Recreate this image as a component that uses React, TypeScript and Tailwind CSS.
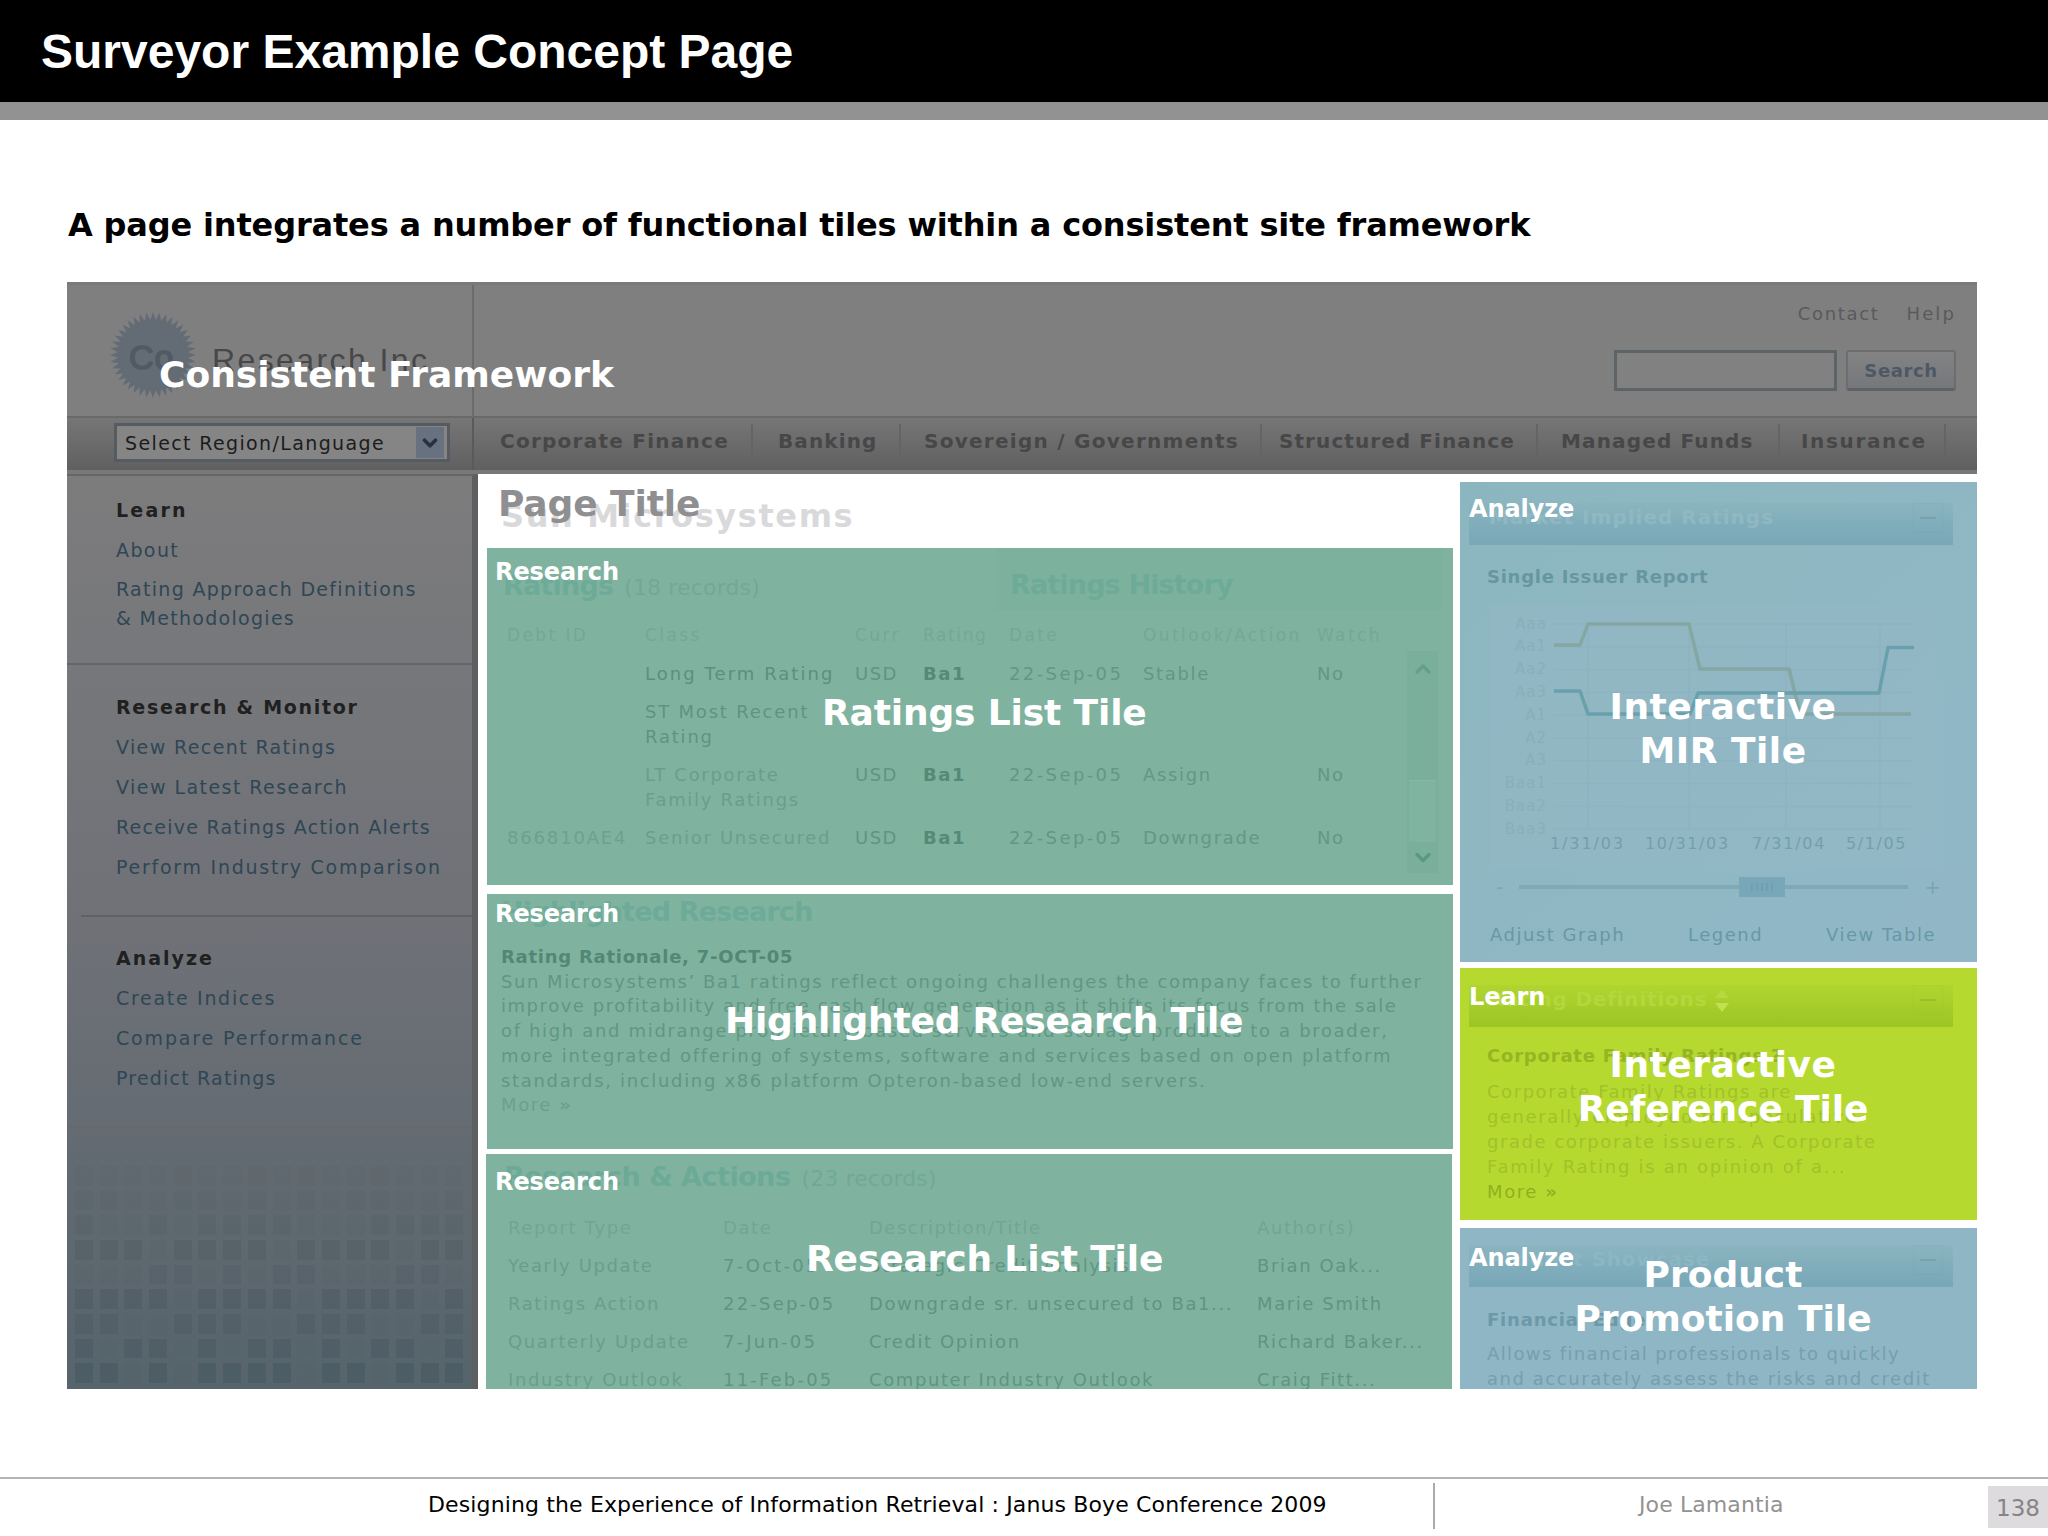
import React from 'react';
import { ChevronDown, ChevronUp } from 'lucide-react';

const NAV_ITEMS = [
  { label: 'Corporate Finance', cls: 'w-[279px] pl-[26px] tracking-[1.25px]' },
  { label: 'Banking', cls: 'w-[148px] pl-[25px] tracking-[1.1px]' },
  { label: 'Sovereign / Governments', cls: 'w-[361px] pl-[23px] tracking-[1.27px]' },
  { label: 'Structured Finance', cls: 'w-[276px] pl-[17px] tracking-[1.08px]' },
  { label: 'Managed Funds', cls: 'w-[242px] pl-[23px] tracking-[1.15px]' },
  { label: 'Insurance', cls: 'w-[166px] pl-[21px] tracking-[1.65px]' },
];

// one string per row, "1" is a visible square
const MOSAIC = [
  '0000100101001000',
  '1100110101011001',
  '1001011110001111',
  '1110111101111011',
  '0001101011000110',
  '1111011110111101',
  '1100111001110011',
  '1011010110101101',
  '1101011110110111',
];
const MOSAIC_TONES = [
  'bg-[#4f564a]/8',
  'bg-[#3f4f58]/10',
  'bg-[#3f4b50]/12',
  'bg-[#3f464e]/18',
  'bg-[#3f4b54]/16',
  'bg-[#3a4850]/22',
  'bg-[#3a4c54]/22',
  'bg-[#324850]/22',
  'bg-[#324850]/26',
];

const RATINGS = [
  { id: '', cls: 'Long Term Rating', cur: 'USD', rating: 'Ba1', date: '22-Sep-05', action: 'Stable', watch: 'No', tone: 'text-[#5b907c] tracking-[2.05px]' },
  { id: '', cls: 'ST Most Recent\nRating', cur: '', rating: '', date: '', action: '', watch: '', tone: 'text-[#5f9480] tracking-[1.8px]' },
  { id: '', cls: 'LT Corporate\nFamily Ratings', cur: 'USD', rating: 'Ba1', date: '22-Sep-05', action: 'Assign', watch: 'No', tone: 'text-[#689f8b] tracking-[1.7px]' },
  { id: '866810AE4', cls: 'Senior Unsecured', cur: 'USD', rating: 'Ba1', date: '22-Sep-05', action: 'Downgrade', watch: 'No', tone: 'text-[#69a08c] tracking-[1.7px]' },
];

const REPORTS = [
  ['Yearly Update', '7-Oct-05', 'Strategic Credit Analysis', 'Brian Oak...'],
  ['Ratings Action', '22-Sep-05', 'Downgrade sr. unsecured to Ba1...', 'Marie Smith'],
  ['Quarterly Update', '7-Jun-05', 'Credit Opinion', 'Richard Baker...'],
  ['Industry Outlook', '11-Feb-05', 'Computer Industry Outlook', 'Craig Fitt...'],
];

const Y_LABELS = ['Aaa', 'Aa1', 'Aa2', 'Aa3', 'A1', 'A2', 'A3', 'Baa1', 'Baa2', 'Baa3'];

const Logo = () => {
  const points = Array.from({ length: 80 }, (_, i) => {
    const r = i % 2 ? 35 : 43;
    const a = (i / 80) * Math.PI * 2;
    return `${(44 + r * Math.cos(a)).toFixed(1)},${(44 + r * Math.sin(a)).toFixed(1)}`;
  }).join(' ');
  return (
    <svg className="w-[88px] h-[88px] shrink-0" viewBox="0 0 88 88">
      <polygon points={points} fill="#636b75" />
      <text x="20" y="58" fontSize="34" letterSpacing="1" fontFamily="Liberation Sans, sans-serif" fill="#505964" stroke="#505964" strokeWidth="1.5">Co</text>
    </svg>
  );
};

const SiteHeader = () => (
  <header className="h-[192px] flex flex-col">
    <div className="h-[134px] flex bg-[#7f7f80] border-t-[3px] border-[#7a7a7a]">
      <div className="w-[407px] border-r-2 border-[#6c6c6d] flex pl-[42px] pt-[26px]">
        <Logo />
        <span className="pl-[15px] pt-[25px] font-['Liberation_Sans',sans-serif] text-[32px] leading-[48px] tracking-[2.4px] text-[#474748]">Research Inc.</span>
      </div>
      <div className="flex-1 flex flex-col items-end pt-[17px]">
        <div className="flex gap-[27px] pr-[21px] text-[18px] leading-6 text-[#5a5a5b]">
          <a className="tracking-[1.67px]">Contact</a>
          <a className="tracking-[2.1px]">Help</a>
        </div>
        <div className="flex gap-[9px] pr-[21px] mt-[24px]">
          <div className="w-[223px] h-[41px] border-[3px] border-[#5c6468] bg-[#818182]" />
          <button className="w-[110px] h-[41px] rounded-[3px] border-2 border-[#6a6e71] border-b-[3px] border-b-[#5f6366] bg-linear-to-b from-[#838384] to-[#75777a] text-[18px] font-bold tracking-[0.6px] text-[#4d5866]">
            Search
          </button>
        </div>
      </div>
    </div>
    <div className="h-[54px] flex bg-linear-to-b from-[#767677] to-[#606061] border-t-2 border-[#69696a]">
      <div className="w-[407px] border-r-2 border-[#5a5a5b] pl-[47px] pt-[5px]">
        <div className="w-[336px] h-[39px] flex items-center border-[3px] border-[#555b60] bg-[#858586] pl-[8px]">
          <span className="flex-1 pt-px text-[19px] tracking-[1.37px] text-[#1c1c1c]">Select Region/Language</span>
          <span className="w-[28px] h-[31px] mr-[3px] flex items-center justify-center bg-[#68717f]">
            <ChevronDown className="w-[22px] h-[22px] text-[#27313f]" strokeWidth={4} />
          </span>
        </div>
      </div>
      <nav className="flex-1 flex items-center text-[20px] font-bold text-[#474748]">
        {NAV_ITEMS.map((item) => (
          <span key={item.label} className={`h-[40px] leading-[35px] border-r-2 border-[#646465] whitespace-nowrap ${item.cls}`}>
            {item.label}
          </span>
        ))}
      </nav>
    </div>
    <div className="h-[4px] bg-[#78787a]" />
  </header>
);

const Sidebar = () => (
  <aside className="w-[411px] h-full flex flex-col bg-linear-to-b from-[#7c7c7d] via-[#6f7177] via-50% to-[#56646c] border-r-[6px] border-[#5e5f60] border-t-2 border-t-[#666667] text-[19px] leading-10 text-[#2f4655] whitespace-nowrap">
    <section className="pl-[49px] pt-[14px] h-[189px] border-b-2 border-[#636465]">
      <h3 className="font-bold tracking-[2.2px] text-[#202021]">Learn</h3>
      <p className="tracking-[1.4px]">About</p>
      <p className="tracking-[1.3px] leading-[29px] py-[5px]">Rating Approach Definitions<br />&amp; Methodologies</p>
    </section>
    <section className="pl-[49px] pt-[22px] h-[252px] ml-[14px] -indent-[14px] border-b-2 border-[#5f6164]">
      <h3 className="font-bold tracking-[1.7px] text-[#202021]">Research &amp; Monitor</h3>
      <p className="tracking-[1.38px]">View Recent Ratings</p>
      <p className="tracking-[1.45px]">View Latest Research</p>
      <p className="tracking-[1.26px]">Receive Ratings Action Alerts</p>
      <p className="tracking-[1.75px]">Perform Industry Comparison</p>
    </section>
    <section className="pl-[49px] pt-[21px] h-[211px] border-b-2 border-[#65686c]">
      <h3 className="font-bold tracking-[2px] text-[#202021]">Analyze</h3>
      <p className="tracking-[1.7px]">Create Indices</p>
      <p className="tracking-[1.85px]">Compare Performance</p>
      <p className="tracking-[1.2px]">Predict Ratings</p>
    </section>
    <div className="mt-auto pl-[8px] pb-[6px] flex flex-col gap-[5px]">
      {MOSAIC.map((row, r) => (
        <div key={r} className="flex gap-[6.7px]">
          {row.split('').map((on, c) => (
            <span key={c} className={`w-[18px] h-[19.7px] ${on === '1' ? MOSAIC_TONES[r] : 'bg-[#3f4f58]/4'}`} />
          ))}
        </div>
      ))}
    </div>
  </aside>
);

interface TileProps {
  tag: string;
  tagCls: string;
  title: string;
  titleCls: string;
  className: string;
  children: React.ReactNode;
}

const Tile: React.FC<TileProps> = ({ tag, tagCls, title, titleCls, className, children }) => (
  <section className={`relative shrink-0 overflow-hidden whitespace-pre ${className}`}>
    {children}
    <span className={`absolute text-[24px] leading-7 font-bold text-white tracking-[-0.1px] ${tagCls}`}>{tag}</span>
    <h2 className={`absolute text-[36px] leading-[44px] font-bold text-white ${titleCls}`}>{title}</h2>
  </section>
);

const RATINGS_GRID = 'grid grid-cols-[138px_210px_68px_86px_134px_174px_1fr] pl-[20px]';

const RatingsTile = () => (
  <Tile tag="Research" tagCls="left-[8px] top-[10px]" title="Ratings List Tile" titleCls="left-[335px] top-[143px] tracking-[-0.14px]" className="h-[337px] bg-[#7fb3a0]">
    <div className="h-[62px] flex text-[27px] leading-10 font-bold text-[#6dab98]">
      <div className="w-[509px] pt-[18px] pl-[16px] tracking-[-0.8px]">
        Ratings<span className="ml-[11px] text-[22px] font-normal tracking-[0.15px] text-[#70a995]">(18 records)</span>
      </div>
      <div className="w-[446px] pt-[17px] pl-[14px] bg-[#7cb19d] tracking-[-0.85px]">Ratings History</div>
    </div>
    <div className="flex">
      <div className="w-[920px] text-[18px] leading-[25px]">
        <div className={`${RATINGS_GRID} h-[51px] leading-[51px] text-[17px] text-[#72a995] tracking-[2.4px]`}>
          <span>Debt ID</span><span>Class</span><span>Curr</span><span className="tracking-[1.6px]">Rating</span><span>Date</span><span>Outlook/Action</span><span>Watch</span>
        </div>
        {RATINGS.map((r, i) => (
          <div key={i} className={`${RATINGS_GRID} pb-[13px] text-[#629884]`}>
            <span className="text-[#6ba28e] tracking-[1.83px]">{r.id}</span>
            <span className={r.tone}>{r.cls}</span>
            <span className="tracking-[1.5px] text-[#5f9581]">{r.cur}</span>
            <b className="tracking-[1.57px] text-[#548a76]">{r.rating}</b>
            <span className="tracking-[2.4px]">{r.date}</span>
            <span className="tracking-[1.65px]">{r.action}</span>
            <span className="tracking-[1.6px]">{r.watch}</span>
          </div>
        ))}
      </div>
      <div className="w-[31px] h-[222px] mt-[41px] flex flex-col items-center justify-between bg-[#7aaf9c]">
        <ChevronUp className="w-[24px] h-[36px] text-[#649f8c]" strokeWidth={3.5} />
        <div className="w-[27px] h-[62px] mt-auto bg-[#7fb4a0] border-t border-[#86b8a6]" />
        <ChevronDown className="w-[24px] h-[31px] text-[#5a9884]" strokeWidth={3.5} />
      </div>
    </div>
  </Tile>
);

const HighlightedTile = () => (
  <Tile tag="Research" tagCls="left-[8px] top-[6px]" title="Highlighted Research Tile" titleCls="left-[238px] top-[105px] tracking-[-0.19px]" className="h-[255px] mt-[9px] pl-[14px] bg-[#7fb3a0]">
    <h3 className="text-[27px] leading-9 font-bold tracking-[-0.8px] text-[#6dab98]">Highlighted Research</h3>
    <div className="mt-[15px] text-[18px] leading-[24.7px] text-[#619783]">
      <h4 className="font-bold tracking-[0.74px] text-[#528874]">Rating Rationale, 7-OCT-05</h4>
      <p className="tracking-[1.54px]">Sun Microsystems’ Ba1 ratings reflect ongoing challenges the company faces to further</p>
      <p className="tracking-[1.54px]">improve profitability and free cash flow generation as it shifts its focus from the sale</p>
      <p className="tracking-[1.66px]">of high and midrange proprietary-based servers and storage products to a broader,</p>
      <p className="tracking-[1.69px]">more integrated offering of systems, software and services based on open platform</p>
      <p className="tracking-[1.67px]">standards, including x86 platform Opteron-based low-end servers.</p>
      <p className="tracking-[1.6px] text-[#6aa18e]">More <b>»</b></p>
    </div>
  </Tile>
);

const REPORT_GRID = 'grid grid-cols-[215px_146px_388px_1fr] pl-[22px]';

const ReportsTile = () => (
  <Tile tag="Research" tagCls="left-[9px] top-[14px]" title="Research List Tile" titleCls="left-[320px] top-[83px] tracking-[-0.13px]" className="h-[235px] mt-[5px] -ml-px mr-px pt-[3px] bg-[#7fb3a0]">
    <h3 className="pl-[18px] text-[27px] leading-10 font-bold tracking-[-0.5px] text-[#6caa97]">
      Research &amp; Actions<span className="ml-[11px] text-[22px] font-normal tracking-[0.1px] text-[#70a995]">(23 records)</span>
    </h3>
    <div className="mt-[10px] text-[18px] leading-[38px] tracking-[1.6px] text-[#5f9581]">
      <div className={`${REPORT_GRID} text-[#6fa793]`}>
        <span>Report Type</span><span>Date</span><span className="tracking-[1.5px]">Description/Title</span><span>Author(s)</span>
      </div>
      {REPORTS.map(([type, date, desc, author]) => (
        <div key={type} className={REPORT_GRID}>
          <span className="text-[#689f8b]">{type}</span>
          <span className="tracking-[2.2px]">{date}</span>
          <span>{desc}</span>
          <span>{author}</span>
        </div>
      ))}
    </div>
  </Tile>
);

const RatingsChart = () => (
  <svg className="w-[447px] h-[265px] ml-[30px] mt-[15px]" viewBox="1490 605 447 265" fontFamily="DejaVu Sans, sans-serif">
    <rect x="1490" y="605" width="447" height="265" fill="#94b9c6" opacity="0.45" />
    <g stroke="#88afbb" strokeWidth="1.5" opacity="0.4">
      {Y_LABELS.map((l, i) => <path key={l} d={`M1553 ${624 + i * 22.8}H1911`} />)}
      <path d="M1588 622V830M1689 622V830M1786 622V830M1880 622V830" />
    </g>
    <g fill="#88afba" fontSize="15" letterSpacing="1" textAnchor="end">
      {Y_LABELS.map((l, i) => <text key={l} x="1547" y={628.5 + i * 22.8}>{l}</text>)}
    </g>
    <g fill="none" strokeWidth="3.5" strokeLinejoin="round">
      <path d="M1554 645H1580L1588 624H1689L1700 669H1789L1800 714H1911" stroke="#85a7a4" />
      <path d="M1554 691H1580L1588 714H1690L1698 693H1879L1888 647.5H1914" stroke="#69a0ad" />
    </g>
    <g fill="#739fab" fontSize="16">
      <text x="1550" y="849" letterSpacing="1.9">1/31/03</text>
      <text x="1645" y="849" letterSpacing="1.6">10/31/03</text>
      <text x="1752" y="849" letterSpacing="1.8">7/31/04</text>
      <text x="1846" y="849" letterSpacing="1.6">5/1/05</text>
    </g>
  </svg>
);

const PanelBar = ({ title, cls, sorter }: { title: string; cls: string; sorter?: boolean }) => (
  <div className={`w-[484px] h-[42px] ml-[9px] pl-[20px] pr-[10px] flex items-start text-[20px] leading-7 font-bold bg-linear-to-b ${cls}`}>
    {title}
    {sorter && (
      <svg className="w-[16px] h-[24px] ml-[7px] mt-[4px]" viewBox="0 0 16 24">
        <path d="M1 9L8 1L15 9Z" fill="#b7d845" />
        <path d="M1 14L8 23L15 14Z" fill="#c3e051" />
      </svg>
    )}
    <span className="ml-auto w-[30px] h-[30px] flex items-center justify-center border border-black/2">
      <span className="w-[16px] h-[2px] bg-black/8" />
    </span>
  </div>
);

const RightColumn = () => (
  <div className="w-[517px] pt-[8px] flex flex-col text-[18px]">
    <Tile tag="Analyze" tagCls="left-[9px] top-[13px]" title={'Interactive\nMIR Tile'} titleCls="inset-x-0 top-[203px] pl-[9px] text-center tracking-[0.5px]" className="h-[480px] bg-linear-to-br from-[#8bb6bf] via-[#8fb7c3] to-[#91b7c7] text-[#6c9ba7]">
      <div className="h-[21px]" />
      <PanelBar title="Market Implied Ratings" cls="from-[#8ab4bf] to-[#78a7b7] text-[#8fb8c3] tracking-[1px]" />
      <h3 className="mt-[18px] pl-[27px] leading-[27px] font-bold tracking-[0.74px] text-[#6796a1]">Single Issuer Report</h3>
      <RatingsChart />
      <div className="h-[34px] px-[36px] flex items-center justify-between text-[20px] text-[#7aa6b2]">
        <span>-</span>
        <div className="w-[389px] h-[4px] flex items-center bg-[#80a9b6]">
          <span className="w-[46px] h-[20px] ml-[220px] flex items-center justify-center gap-[3px] bg-[#77a7b8]">
            {[0, 1, 2, 3, 4].map((i) => <i key={i} className="w-[2px] h-[8px] bg-[#709fb1]" />)}
          </span>
        </div>
        <span>+</span>
      </div>
      <div className="mt-[17px] pl-[30px] pr-[41px] flex justify-between leading-7 tracking-[1.5px] text-[#6898a5]">
        <span>Adjust Graph</span><span>Legend</span><span>View Table</span>
      </div>
    </Tile>
    <Tile tag="Learn" tagCls="left-[9px] top-[15px]" title={'Interactive\nReference Tile'} titleCls="inset-x-0 top-[75px] pl-[9px] text-center tracking-[-0.1px] first-line:tracking-[0.5px]" className="h-[252px] mt-[6px] bg-[#b6d930] text-[#a1c228]">
      <div className="h-[17px]" />
      <PanelBar title="Rating Definitions" cls="from-[#b0d52f] to-[#9cc625] text-[#b3d73c] tracking-[0.8px]" sorter />
      <h3 className="mt-[15px] pl-[27px] leading-[27px] font-bold tracking-[0.8px] text-[#95b522]">Corporate Family Ratings ?</h3>
      <div className="mt-[10px] pl-[27px] leading-[25px] tracking-[1.55px]">
        <p>Corporate Family Ratings are</p>
        <p>generally employed for speculative</p>
        <p>grade corporate issuers. A Corporate</p>
        <p className="tracking-[1.72px]">Family Rating is an opinion of a...</p>
        <p className="text-[#8fb11f] tracking-[1.6px]">More <b>»</b></p>
      </div>
    </Tile>
    <Tile tag="Analyze" tagCls="left-[9px] top-[16px]" title={'Product\nPromotion Tile'} titleCls="inset-x-0 top-[25px] pl-[9px] text-center" className="h-[161px] mt-[8px] bg-[#8fb6c4] text-[#759fae]">
      <div className="h-[17px]" />
      <PanelBar title="Product Showcase" cls="from-[#8ab4bf] to-[#78a7b8] text-[#8bb6c4] tracking-[0.9px]" />
      <h3 className="mt-[19px] pl-[27px] leading-[27px] font-bold tracking-[0.8px] text-[#6c98a7]">Financial Edge</h3>
      <div className="mt-[9px] pl-[27px] leading-[24.5px]">
        <p className="tracking-[1.37px]">Allows financial professionals to quickly</p>
        <p className="tracking-[1.55px]">and accurately assess the risks and credit</p>
      </div>
    </Tile>
  </div>
);

const App: React.FC = () => (
  <div className="w-[2048px] h-[1536px] flex flex-col overflow-hidden bg-white font-['DejaVu_Sans',Verdana,sans-serif]">
    <div className="h-[120px] shrink-0 flex items-center pl-[41px] pt-[2px] bg-black border-b-[18px] border-[#929292]">
      <h1 className="font-['Liberation_Sans',Arial,sans-serif] text-[48px] font-bold text-white">Surveyor Example Concept Page</h1>
    </div>
    <p className="mt-[85px] pl-[68px] text-[32px] leading-10 font-bold tracking-[-0.16px] text-black">
      A page integrates a number of functional tiles within a consistent site framework
    </p>

    <main className="relative w-[1910px] h-[1107px] ml-[67px] mt-[37px] shrink-0">
      <SiteHeader />
      <div className="flex h-[915px]">
        <Sidebar />
        <div className="w-[966px] ml-[9px] mr-[7px]">
          <div className="relative h-[74px] pt-[22px] pl-[14px]">
            <p className="text-[32px] leading-10 font-bold tracking-[1.6px] text-[#d9d9db]">Sun Microsystems</p>
            <h2 className="absolute left-[11px] top-[10px] text-[36px] leading-10 font-bold tracking-[-0.1px] text-[#8f8f91]">Page Title</h2>
          </div>
          <RatingsTile />
          <HighlightedTile />
          <ReportsTile />
        </div>
        <RightColumn />
      </div>
      <h2 className="absolute left-[92px] top-[73px] text-[36px] leading-10 font-bold text-white">Consistent Framework</h2>
    </main>

    <footer className="mt-auto h-[59px] flex border-t-2 border-[#b4b4b4] text-[22px] text-black">
      <div className="w-[1433px] pl-[428px] pt-[8px] leading-9 tracking-[0.13px]">
        Designing the Experience of Information Retrieval : Janus Boye Conference 2009
      </div>
      <div className="h-[46px] mt-[4px] border-l-2 border-[#ababab] pl-[204px] pt-[4px] leading-9 tracking-[0.1px] text-[#929292]">Joe Lamantia</div>
      <div className="w-[60px] h-[42px] mt-[7px] ml-auto pl-[8px] leading-[45px] text-[23px] bg-[#dddbde] text-[#858587]">138</div>
    </footer>
  </div>
);

export default App;
